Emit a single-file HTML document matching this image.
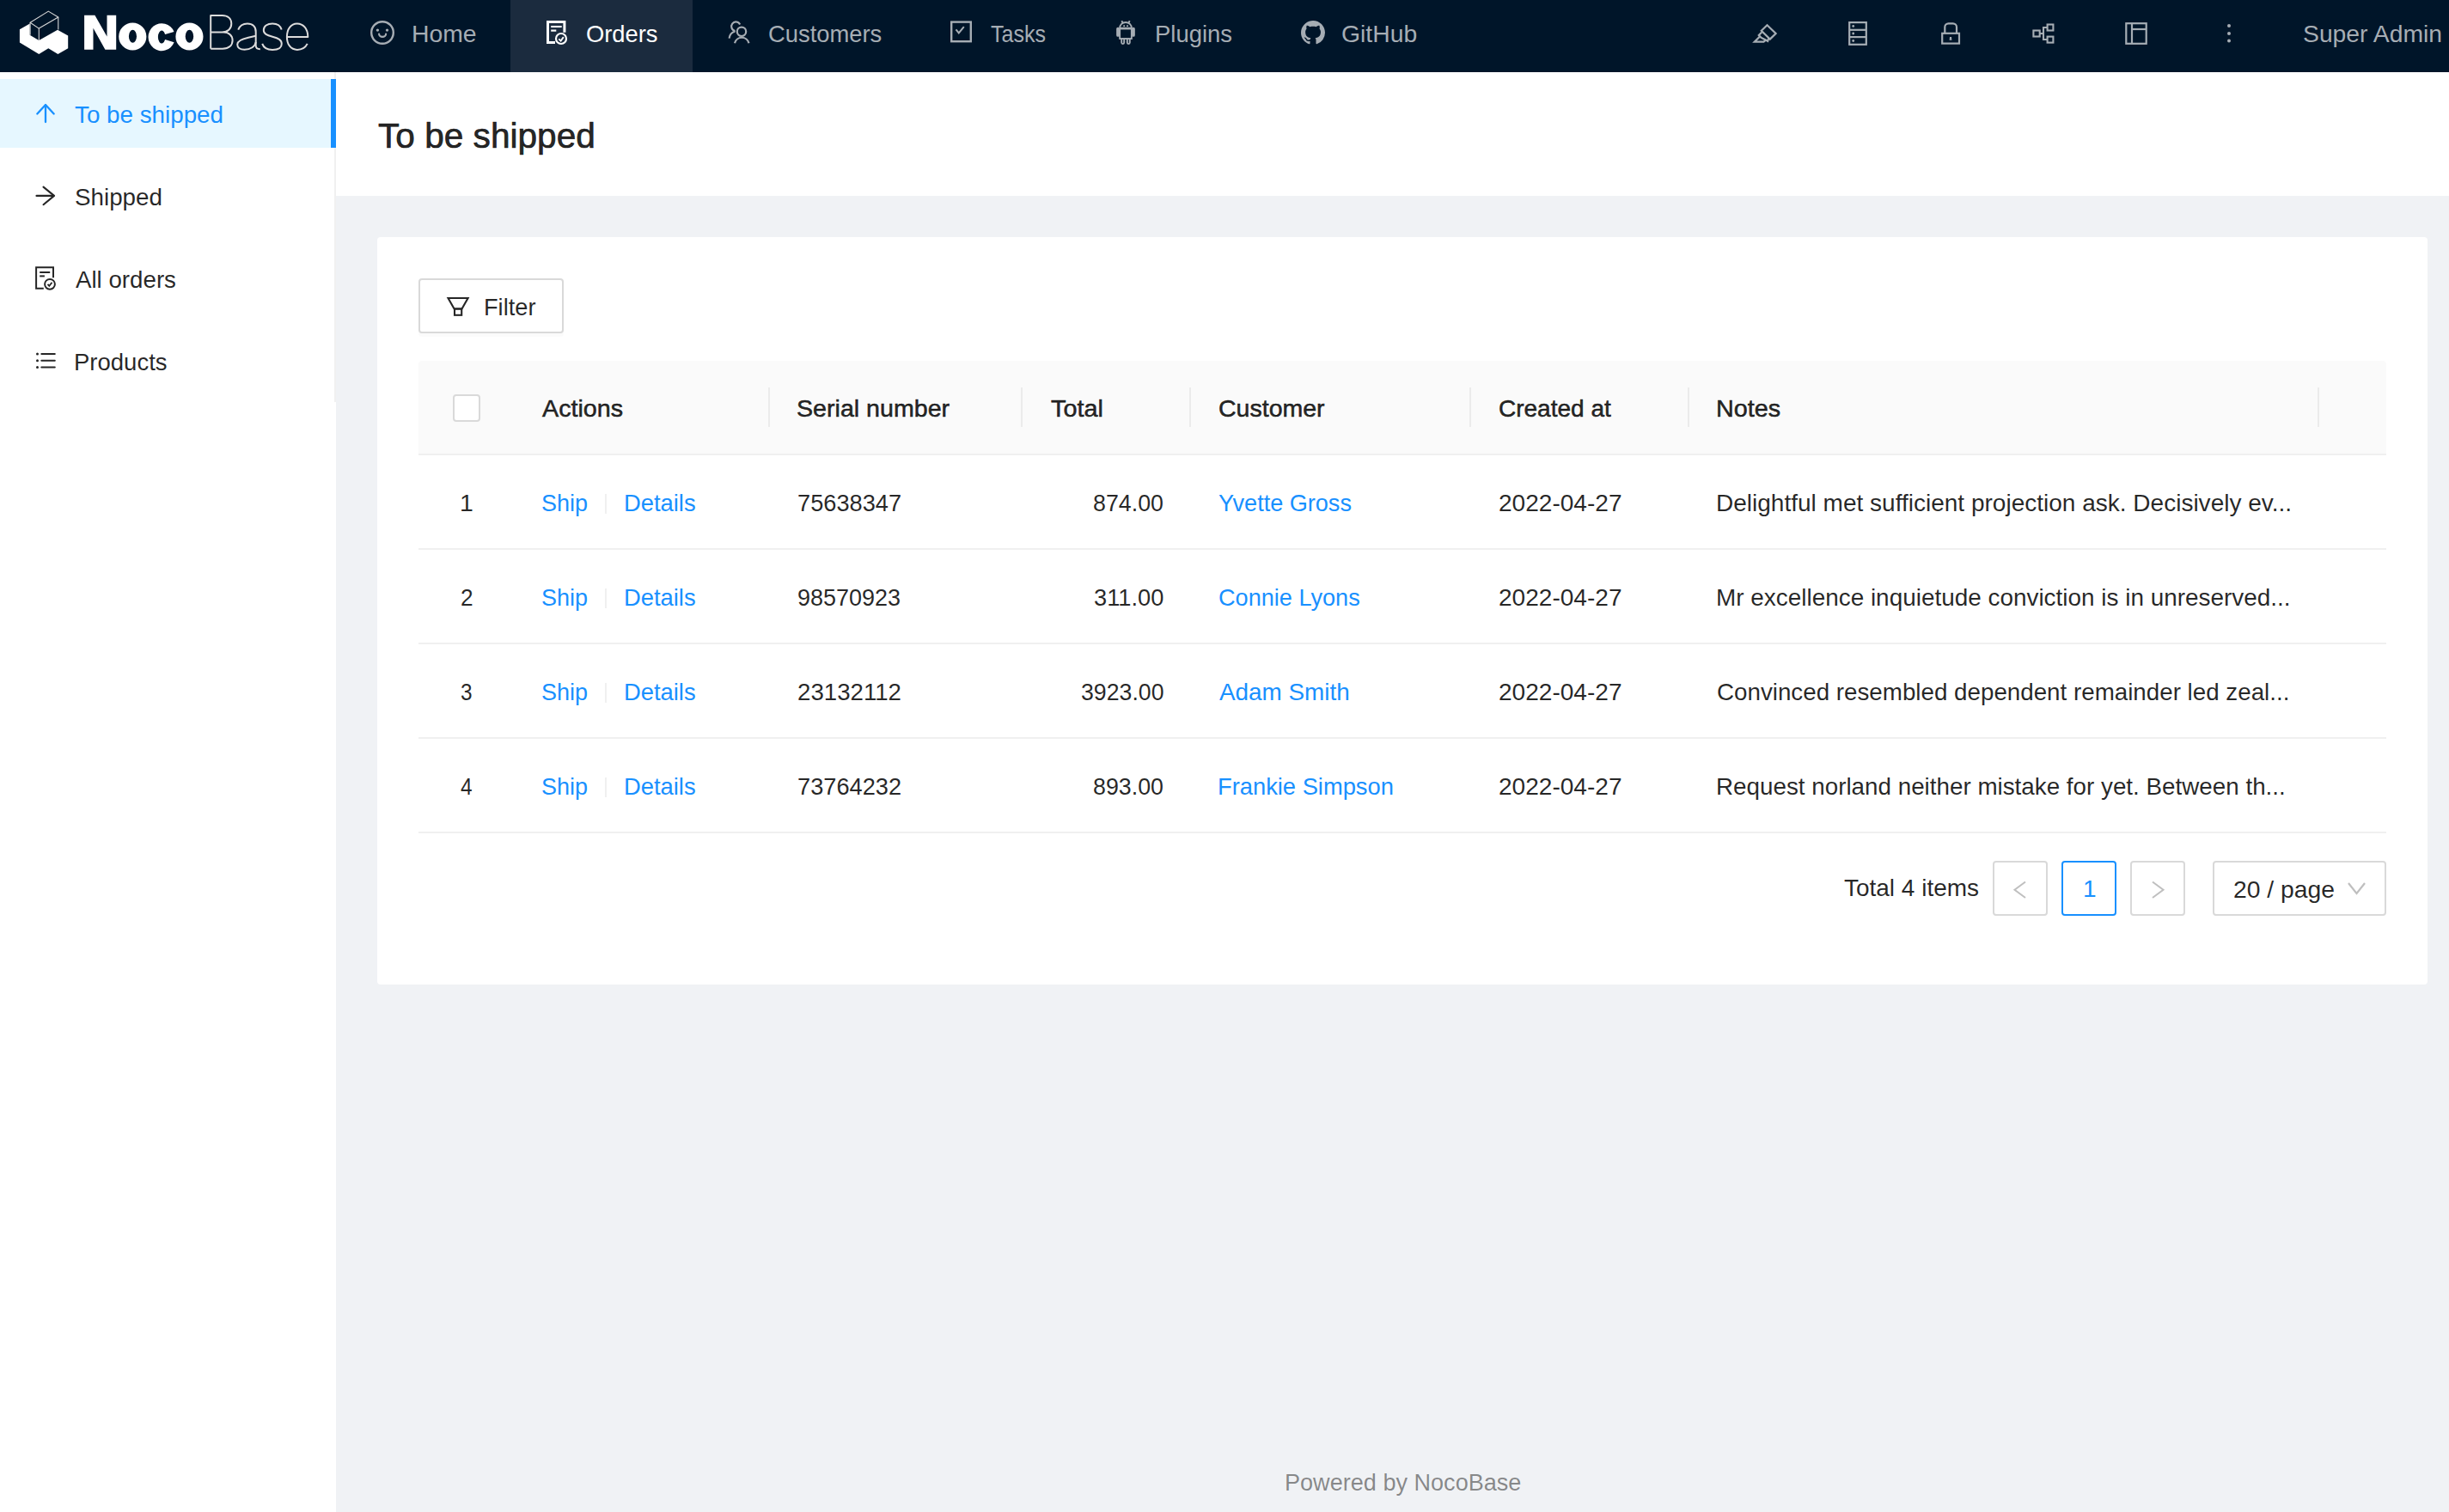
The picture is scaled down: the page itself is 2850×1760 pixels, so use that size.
<!DOCTYPE html>
<html><head><meta charset="utf-8"><title>NocoBase</title>
<style>
html,body{margin:0;padding:0;width:2850px;height:1760px;overflow:hidden;background:#f0f2f5;}
body{position:relative;font-family:'Liberation Sans',sans-serif;}
.r{position:absolute;box-sizing:border-box;}
.t{position:absolute;white-space:nowrap;transform-origin:0 0;font-family:'Liberation Sans',sans-serif;}
svg{position:absolute;left:0;top:0;}
</style></head><body>

<div class="r" style="left:0px;top:0px;width:2850px;height:84px;background:#001529;"></div>
<div class="r" style="left:594px;top:0px;width:212px;height:84px;background:#1b2b3e;"></div>
<div class="r" style="left:0px;top:84px;width:391px;height:1676px;background:#ffffff;"></div>
<div class="r" style="left:389px;top:84px;width:2px;height:384px;background:#f0f0f0;"></div>
<div class="r" style="left:0px;top:92px;width:385px;height:80px;background:#e6f7ff;"></div>
<div class="r" style="left:385px;top:92px;width:6px;height:80px;background:#1890ff;"></div>
<div class="r" style="left:391px;top:84px;width:2459px;height:144px;background:#ffffff;"></div>
<div class="r" style="left:439px;top:276px;width:2386px;height:870px;background:#ffffff;border-radius:4px;"></div>
<div class="r" style="left:487px;top:324px;width:169px;height:64px;background:#ffffff;border:2px solid #d9d9d9;border-radius:4px;box-shadow:0 4px 0 rgba(0,0,0,0.016);"></div>
<div class="r" style="left:487px;top:420px;width:2290px;height:108px;background:#fafafa;border-radius:4px 4px 0 0;"></div>
<div class="r" style="left:487px;top:528px;width:2290px;height:2px;background:#f0f0f0;"></div>
<div class="r" style="left:894px;top:451px;width:2px;height:46px;background:#ebebeb;"></div>
<div class="r" style="left:1188px;top:451px;width:2px;height:46px;background:#ebebeb;"></div>
<div class="r" style="left:1384px;top:451px;width:2px;height:46px;background:#ebebeb;"></div>
<div class="r" style="left:1710px;top:451px;width:2px;height:46px;background:#ebebeb;"></div>
<div class="r" style="left:1964px;top:451px;width:2px;height:46px;background:#ebebeb;"></div>
<div class="r" style="left:2697px;top:451px;width:2px;height:46px;background:#ebebeb;"></div>
<div class="r" style="left:527px;top:459px;width:32px;height:32px;background:#ffffff;border:2px solid #d9d9d9;border-radius:4px;"></div>
<div class="r" style="left:487px;top:638px;width:2290px;height:2px;background:#f0f0f0;"></div>
<div class="r" style="left:487px;top:748px;width:2290px;height:2px;background:#f0f0f0;"></div>
<div class="r" style="left:487px;top:858px;width:2290px;height:2px;background:#f0f0f0;"></div>
<div class="r" style="left:487px;top:968px;width:2290px;height:2px;background:#f0f0f0;"></div>
<div class="r" style="left:704px;top:575px;width:2px;height:23px;background:#f0f0f0;"></div>
<div class="r" style="left:704px;top:685px;width:2px;height:23px;background:#f0f0f0;"></div>
<div class="r" style="left:704px;top:795px;width:2px;height:23px;background:#f0f0f0;"></div>
<div class="r" style="left:704px;top:905px;width:2px;height:23px;background:#f0f0f0;"></div>
<div class="r" style="left:2319px;top:1002px;width:64px;height:64px;background:#ffffff;border:2px solid #d9d9d9;border-radius:4px;"></div>
<div class="r" style="left:2399px;top:1002px;width:64px;height:64px;background:#ffffff;border:2px solid #1890ff;border-radius:4px;"></div>
<div class="r" style="left:2479px;top:1002px;width:64px;height:64px;background:#ffffff;border:2px solid #d9d9d9;border-radius:4px;"></div>
<div class="r" style="left:2575px;top:1002px;width:202px;height:64px;background:#ffffff;border:2px solid #d9d9d9;border-radius:4px;"></div>
<svg width="2850" height="1760" viewBox="0 0 2850 1760">
<polygon fill="#ffffff" points="22.9,34.3 34.7,27.6 34.7,40.8 45.3,47.0 67.0,34.7 79.2,41.6 79.2,56.3 67.4,62.9 56.3,56.3 45.3,62.9 22.9,49.4"/>
<g fill="none" stroke="#d8d8d8" stroke-width="1.1" stroke-linejoin="round"><polygon points="35.1,26.3 56.3,13.1 67.8,20.0 45.3,33.1"/><polyline points="35.1,26.3 35.1,40.8"/><polyline points="45.3,33.1 45.3,47"/><polyline points="67.8,20.0 67.8,34.4"/></g>
<g fill="#ffffff"><polygon points="98.1,17.65 110.4,17.65 124.5,42.5 124.5,17.65 135.2,17.65 135.2,57.8 122.4,57.8 108.5,32.7 108.5,57.8 98.1,57.8"/><path fill-rule="evenodd" d="M138.2,42.45 a16.1,16 0 1,0 32.2,0 a16.1,16 0 1,0 -32.2,0 Z M149.9,42.3 a4.55,7.5 0 1,0 9.1,0 a4.55,7.5 0 1,0 -9.1,0 Z"/><path d="M202.5,36.9 A15.6,16 0 1,0 202.6,49.2 L192.1,46.1 A4.3,7.5 0 1,1 192.1,40 Z"/><path fill-rule="evenodd" d="M204.4,42.45 a16.05,16 0 1,0 32.1,0 a16.05,16 0 1,0 -32.1,0 Z M215.7,42.3 a4.75,7.5 0 1,0 9.5,0 a4.75,7.5 0 1,0 -9.5,0 Z"/></g>
<g fill="none" stroke="#dcdcdc" stroke-width="2" stroke-linecap="butt" stroke-linejoin="round"><path d="M245.2,56.7 V18 H258.5 C265,18 269.3,21.5 269.3,27.6 C269.3,33.6 265,37.6 258.5,37.6 H245.2 M258.5,37.6 H260 C266.5,37.6 270.6,41.5 270.6,47.1 C270.6,52.8 266.5,56.7 259,56.7 H245.2"/><path d="M277.2,34.6 C279,30 283,27.5 287.9,27.5 C294,27.5 297.7,31 297.7,37 V53 C297.7,56 299.5,57.2 302.8,57.2"/><path d="M297.7,41.8 L289,43.8 C281,45.5 276.2,47.5 276.2,51.8 C276.2,55.5 279.5,57.8 284.5,57.8 C291.5,57.8 297.2,54 297.7,49"/><path d="M327.7,34.6 C326.5,30 322.5,27.4 317.1,27.4 C311,27.4 306.8,30.5 306.8,35 C306.8,39.5 310.5,41 317.1,42.8 C324,44.6 327.8,46.3 327.8,51 C327.8,55.5 323.5,57.9 317.1,57.9 C310.5,57.9 306.6,55.2 305.2,50.9"/><path d="M334.1,42.9 H358.3 C358.3,33.5 353,27.5 345.7,27.5 C338.5,27.5 333.9,34 333.9,42.9 C333.9,51.8 338.5,57.9 345.9,57.9 C351.5,57.9 355.7,55 357.7,50.9"/></g>
<g fill="none" stroke="#a6adb4" stroke-width="2.4"><circle cx="445" cy="38" r="12.8"/><path d="M441.1,39.6 A4.0,3.3 0 0,0 449.1,39.6" stroke-width="2.2" stroke-linecap="round"/></g>
<circle cx="439.4" cy="35.1" r="1.7" fill="#a6adb4"/><circle cx="450.5" cy="35.1" r="1.7" fill="#a6adb4"/>
<g fill="none" stroke="#ffffff" stroke-width="3"><polyline points="646,49.5 637.5,49.5 637.5,25.4 656.9,25.4 656.9,37.8"/><line x1="641.2" y1="31" x2="653.7" y2="31" stroke-width="2.1"/><line x1="641.2" y1="35.6" x2="647.3" y2="35.6" stroke-width="2.2"/><circle cx="653" cy="45" r="6" stroke-width="2.2"/><polyline points="650.3,45.4 652.6,47.6 655.8,43.1" stroke-width="1.9"/></g>
<g fill="none" stroke="#a6adb4" stroke-width="2.2"><circle cx="863" cy="36.8" r="5.2"/><path d="M855,50.2 A8.5,8.5 0 0,1 871.5,50.2"/><path d="M861.2,28.5 A5.3,5.3 0 1,0 855.5,36"/><path d="M848.6,44.6 A9.5,9.5 0 0,1 855.5,36.5"/></g>
<g fill="none" stroke="#a6adb4" stroke-width="2.4"><rect x="1107.2" y="25.6" width="22.6" height="22.6"/><polyline points="1112.5,34.4 1115.8,38.5 1121.8,31.2" stroke-width="2"/></g>
<g fill="none" stroke="#a6adb4" stroke-width="1.9"><rect x="1303.15" y="33.5" width="13.7" height="11.5"/><path d="M1303.15,32.6 A6.85,6.6 0 0,1 1316.85,32.6 Z"/><rect x="1300.1" y="32.6" width="1.9" height="9.3" rx="0.9"/><rect x="1318" y="32.6" width="1.9" height="9.3" rx="0.9"/><path d="M1305.2,45 V49.6 A1.5,1.5 0 0,0 1308.2,49.6 V45"/><path d="M1311.8,45 V49.6 A1.5,1.5 0 0,0 1314.8,49.6 V45"/><line x1="1305.3" y1="24.3" x2="1306.8" y2="27"/><line x1="1314.7" y1="24.3" x2="1313.2" y2="27"/></g>
<rect x="1307.3" y="29.3" width="1.8" height="1.8" fill="#a6adb4"/><rect x="1311.1" y="29.3" width="1.8" height="1.8" fill="#a6adb4"/>
<path fill="#a6adb4" fill-rule="evenodd" transform="translate(1514,24) scale(1.75)" d="M8 0C3.58 0 0 3.58 0 8c0 3.54 2.29 6.53 5.47 7.59.4.07.55-.17.55-.38 0-.19-.01-.82-.01-1.49-2.01.37-2.53-.49-2.69-.94-.09-.23-.48-.94-.82-1.13-.28-.15-.68-.52-.01-.53.63-.01 1.08.58 1.23.82.72 1.21 1.87.87 2.33.66.07-.52.28-.87.51-1.07-1.78-.2-3.64-.89-3.640-3.950 0-.87.31-1.59.82-2.15-.08-.2-.36-1.02.08-2.12 0 0 .67-.21 2.2.82.64-.18 1.32-.27 2-.27.68 0 1.36.09 2 .27 1.53-1.04 2.2-.82 2.2-.82.44 1.1.16 1.92.08 2.12.51.56.82 1.27.82 2.15 0 3.07-1.87 3.750-3.65 3.95.29.25.54.73.54 1.48 0 1.07-.01 1.93-.01 2.2 0 .21.15.46.55.38A8.013 8.013 0 0016 8c0-4.42-3.58-8-8-8z"/>
<g fill="none" stroke="#a6adb4" stroke-width="2.2"><path d="M2056.5,29.3 L2066.6,39 L2059.8,45.6 L2049.8,35.8 Z" stroke-linejoin="miter"/><path d="M2050.2,37.5 L2046.8,41 L2049.3,43.6 L2057.2,47.8 L2058.3,44.2" /><path d="M2048,42.5 L2041.8,48.6 L2052.5,48.6 L2055.2,46.4"/></g>
<g fill="none" stroke="#a6adb4" stroke-width="2.2"><rect x="2152.2" y="26.1" width="19.6" height="25.7"/><line x1="2152.2" y1="34.8" x2="2171.8" y2="34.8"/><line x1="2152.2" y1="43.1" x2="2171.8" y2="43.1"/></g>
<circle cx="2156.7" cy="30.4" r="1.4" fill="#a6adb4"/>
<circle cx="2156.7" cy="39" r="1.4" fill="#a6adb4"/>
<circle cx="2156.7" cy="47.5" r="1.4" fill="#a6adb4"/>
<g fill="none" stroke="#a6adb4" stroke-width="2.2"><rect x="2260.2" y="38.8" width="19.8" height="11.8"/><path d="M2263.3,38.8 V31.5 A4.2,4.2 0 0,1 2267.5,27.3 H2272.8 A4.2,4.2 0 0,1 2277,31.5 V38.8"/></g>
<path fill="#a6adb4" d="M2269,43 h2 l0.4,3.8 h-2.8 Z"/>
<g fill="none" stroke="#a6adb4" stroke-width="2.1"><rect x="2366.4" y="35.5" width="7.3" height="7"/><rect x="2382.6" y="28.5" width="6.8" height="7"/><rect x="2382.6" y="42.6" width="6.8" height="7"/><polyline points="2382.6,32 2378,32 2378,46 2382.6,46"/><line x1="2373.7" y1="39" x2="2378" y2="39"/></g>
<g fill="none" stroke="#a6adb4" stroke-width="2.2"><rect x="2474.3" y="27.2" width="23.4" height="23.6"/><line x1="2481" y1="27.2" x2="2481" y2="50.8"/><line x1="2481" y1="34" x2="2497.7" y2="34"/></g>
<circle cx="2594" cy="30" r="2" fill="#a6adb4"/>
<circle cx="2594" cy="38.9" r="2" fill="#a6adb4"/>
<circle cx="2594" cy="47.6" r="2" fill="#a6adb4"/>
<g fill="none" stroke="#1890ff" stroke-width="2.3" stroke-linecap="round" stroke-linejoin="round"><line x1="53" y1="122.5" x2="53" y2="142"/><polyline points="43.3,132.5 53,122 62.7,132.5"/></g>
<g fill="none" stroke="#262626" stroke-width="2.1" stroke-linecap="round" stroke-linejoin="round"><line x1="42.5" y1="227.9" x2="62.5" y2="227.9"/><polyline points="50.5,217.6 63,227.9 50.5,238.2"/></g>
<g fill="none" stroke="#262626" stroke-width="2"><polyline points="50.8,335.7 42.1,335.7 42.1,311.2 62,311.2 62,323.3"/><line x1="46.2" y1="317" x2="58.2" y2="317"/><line x1="46.2" y1="321.4" x2="51.9" y2="321.4"/><circle cx="58" cy="330.8" r="5.9"/><polyline points="55.5,330.8 57.3,332.9 60.5,328.8" stroke-width="1.8"/></g>
<g fill="none" stroke="#262626" stroke-width="2" stroke-linecap="round"><line x1="48.3" y1="412" x2="63.8" y2="412"/><line x1="48.3" y1="419.8" x2="63.8" y2="419.8"/><line x1="48.3" y1="427.6" x2="63.8" y2="427.6"/></g>
<circle cx="43.5" cy="412" r="1.5" fill="#262626"/>
<circle cx="43.5" cy="419.8" r="1.5" fill="#262626"/>
<circle cx="43.5" cy="427.6" r="1.5" fill="#262626"/>
<g fill="none" stroke="#262626" stroke-width="2.1" stroke-linejoin="miter"><path d="M521.5,347 H544.6 L537.5,359.5 H528.6 Z"/><rect x="529" y="359.5" width="8.2" height="7.3"/></g>
<g fill="none" stroke="#bfbfbf" stroke-width="2.2"><polyline points="2357,1026.5 2344.5,1035.7 2357,1045" stroke-width="2"/><polyline points="2505,1026.5 2517.5,1035.7 2505,1045" stroke-width="2"/><polyline points="2733,1028 2742.5,1040 2752,1028" stroke="#bfbfbf"/></g>
</svg>
<span class="t" style="left:478.88px;top:26px;font-size:28px;line-height:28px;font-weight:400;color:#a6adb4;transform:scaleX(1.0125);">Home</span>
<span class="t" style="left:682.02px;top:26px;font-size:28px;line-height:28px;font-weight:400;color:#ffffff;transform:scaleX(0.9762);">Orders</span>
<span class="t" style="left:893.52px;top:26px;font-size:28px;line-height:28px;font-weight:400;color:#a6adb4;transform:scaleX(0.9774);">Customers</span>
<span class="t" style="left:1152.51px;top:26px;font-size:28px;line-height:28px;font-weight:400;color:#a6adb4;transform:scaleX(0.8943);">Tasks</span>
<span class="t" style="left:1343.84px;top:26px;font-size:28px;line-height:28px;font-weight:400;color:#a6adb4;transform:scaleX(0.9798);">Plugins</span>
<span class="t" style="left:1560.99px;top:26px;font-size:28px;line-height:28px;font-weight:400;color:#a6adb4;transform:scaleX(1.0118);">GitHub</span>
<span class="t" style="left:2679.99px;top:26px;font-size:28px;line-height:28px;font-weight:400;color:#a6adb4;transform:scaleX(1.0108);">Super Admin</span>
<span class="t" style="left:87.21px;top:120px;font-size:28px;line-height:28px;font-weight:400;color:#1890ff;transform:scaleX(0.9924);">To be shipped</span>
<span class="t" style="left:87.31px;top:216px;font-size:28px;line-height:28px;font-weight:400;color:rgba(0,0,0,0.85);transform:scaleX(0.9920);">Shipped</span>
<span class="t" style="left:88.30px;top:312px;font-size:28px;line-height:28px;font-weight:400;color:rgba(0,0,0,0.85);transform:scaleX(0.9889);">All orders</span>
<span class="t" style="left:86.34px;top:408px;font-size:28px;line-height:28px;font-weight:400;color:rgba(0,0,0,0.85);transform:scaleX(0.9824);">Products</span>
<span class="t" style="left:440.00px;top:138px;font-size:40px;line-height:40px;font-weight:400;color:rgba(0,0,0,0.85);transform:scaleX(1.0150);-webkit-text-stroke:0.70px rgba(0,0,0,0.85);">To be shipped</span>
<span class="t" style="left:563.26px;top:344px;font-size:28px;line-height:28px;font-weight:400;color:rgba(0,0,0,0.85);transform:scaleX(0.9717);">Filter</span>
<span class="t" style="left:630.70px;top:462px;font-size:28px;line-height:28px;font-weight:400;color:rgba(0,0,0,0.85);transform:scaleX(1.0253);-webkit-text-stroke:0.55px rgba(0,0,0,0.85);">Actions</span>
<span class="t" style="left:926.98px;top:462px;font-size:28px;line-height:28px;font-weight:400;color:rgba(0,0,0,0.85);transform:scaleX(1.0220);-webkit-text-stroke:0.55px rgba(0,0,0,0.85);">Serial number</span>
<span class="t" style="left:1222.70px;top:462px;font-size:28px;line-height:28px;font-weight:400;color:rgba(0,0,0,0.85);transform:scaleX(1.0293);-webkit-text-stroke:0.55px rgba(0,0,0,0.85);">Total</span>
<span class="t" style="left:1417.78px;top:462px;font-size:28px;line-height:28px;font-weight:400;color:rgba(0,0,0,0.85);transform:scaleX(1.0183);-webkit-text-stroke:0.55px rgba(0,0,0,0.85);">Customer</span>
<span class="t" style="left:1744.00px;top:462px;font-size:28px;line-height:28px;font-weight:400;color:rgba(0,0,0,0.85);transform:scaleX(1.0000);-webkit-text-stroke:0.55px rgba(0,0,0,0.85);">Created at</span>
<span class="t" style="left:1996.55px;top:462px;font-size:28px;line-height:28px;font-weight:400;color:rgba(0,0,0,0.85);transform:scaleX(1.0268);-webkit-text-stroke:0.55px rgba(0,0,0,0.85);">Notes</span>
<span class="t" style="left:2145.90px;top:1020px;font-size:28px;line-height:28px;font-weight:400;color:rgba(0,0,0,0.85);transform:scaleX(1.0000);">Total 4 items</span>
<span class="t" style="left:2599.29px;top:1022px;font-size:28px;line-height:28px;font-weight:400;color:rgba(0,0,0,0.85);transform:scaleX(1.0104);">20 / page</span>
<span class="t" style="left:1494.57px;top:1712px;font-size:28px;line-height:28px;font-weight:400;color:rgba(0,0,0,0.45);transform:scaleX(0.9670);">Powered by NocoBase</span>
<span class="t" style="left:534.67px;top:572px;font-size:28px;line-height:28px;font-weight:400;color:rgba(0,0,0,0.85);transform:scaleX(1.0167);">1</span>
<span class="t" style="left:629.74px;top:572px;font-size:28px;line-height:28px;font-weight:400;color:#1890ff;transform:scaleX(0.9630);">Ship</span>
<span class="t" style="left:725.55px;top:572px;font-size:28px;line-height:28px;font-weight:400;color:#1890ff;transform:scaleX(0.9771);">Details</span>
<span class="t" style="left:927.53px;top:572px;font-size:28px;line-height:28px;font-weight:400;color:rgba(0,0,0,0.85);transform:scaleX(0.9713);">75638347</span>
<span class="t" style="left:1272.04px;top:572px;font-size:28px;line-height:28px;font-weight:400;color:rgba(0,0,0,0.85);transform:scaleX(0.9571);">874.00</span>
<span class="t" style="left:1417.83px;top:572px;font-size:28px;line-height:28px;font-weight:400;color:#1890ff;transform:scaleX(0.9665);">Yvette Gross</span>
<span class="t" style="left:1744.00px;top:572px;font-size:28px;line-height:28px;font-weight:400;color:rgba(0,0,0,0.85);transform:scaleX(1.0021);">2022-04-27</span>
<span class="t" style="left:1996.60px;top:572px;font-size:28px;line-height:28px;font-weight:400;color:rgba(0,0,0,0.85);transform:scaleX(1.0006);">Delightful met sufficient projection ask. Decisively ev...</span>
<span class="t" style="left:535.76px;top:682px;font-size:28px;line-height:28px;font-weight:400;color:rgba(0,0,0,0.85);transform:scaleX(0.9385);">2</span>
<span class="t" style="left:629.74px;top:682px;font-size:28px;line-height:28px;font-weight:400;color:#1890ff;transform:scaleX(0.9630);">Ship</span>
<span class="t" style="left:725.55px;top:682px;font-size:28px;line-height:28px;font-weight:400;color:#1890ff;transform:scaleX(0.9771);">Details</span>
<span class="t" style="left:927.54px;top:682px;font-size:28px;line-height:28px;font-weight:400;color:rgba(0,0,0,0.85);transform:scaleX(0.9634);">98570923</span>
<span class="t" style="left:1272.63px;top:682px;font-size:28px;line-height:28px;font-weight:400;color:rgba(0,0,0,0.85);transform:scaleX(0.9732);">311.00</span>
<span class="t" style="left:1417.83px;top:682px;font-size:28px;line-height:28px;font-weight:400;color:#1890ff;transform:scaleX(0.9679);">Connie Lyons</span>
<span class="t" style="left:1744.00px;top:682px;font-size:28px;line-height:28px;font-weight:400;color:rgba(0,0,0,0.85);transform:scaleX(1.0021);">2022-04-27</span>
<span class="t" style="left:1996.61px;top:682px;font-size:28px;line-height:28px;font-weight:400;color:rgba(0,0,0,0.85);transform:scaleX(0.9967);">Mr excellence inquietude conviction is in unreserved...</span>
<span class="t" style="left:535.83px;top:792px;font-size:28px;line-height:28px;font-weight:400;color:rgba(0,0,0,0.85);transform:scaleX(0.8714);">3</span>
<span class="t" style="left:629.74px;top:792px;font-size:28px;line-height:28px;font-weight:400;color:#1890ff;transform:scaleX(0.9630);">Ship</span>
<span class="t" style="left:725.55px;top:792px;font-size:28px;line-height:28px;font-weight:400;color:#1890ff;transform:scaleX(0.9771);">Details</span>
<span class="t" style="left:927.51px;top:792px;font-size:28px;line-height:28px;font-weight:400;color:rgba(0,0,0,0.85);transform:scaleX(0.9875);">23132112</span>
<span class="t" style="left:1258.05px;top:792px;font-size:28px;line-height:28px;font-weight:400;color:rgba(0,0,0,0.85);transform:scaleX(0.9535);">3923.00</span>
<span class="t" style="left:1418.80px;top:792px;font-size:28px;line-height:28px;font-weight:400;color:#1890ff;transform:scaleX(0.9947);">Adam Smith</span>
<span class="t" style="left:1744.00px;top:792px;font-size:28px;line-height:28px;font-weight:400;color:rgba(0,0,0,0.85);transform:scaleX(1.0021);">2022-04-27</span>
<span class="t" style="left:1997.61px;top:792px;font-size:28px;line-height:28px;font-weight:400;color:rgba(0,0,0,0.85);transform:scaleX(0.9910);">Convinced resembled dependent remainder led zeal...</span>
<span class="t" style="left:535.83px;top:902px;font-size:28px;line-height:28px;font-weight:400;color:rgba(0,0,0,0.85);transform:scaleX(0.8714);">4</span>
<span class="t" style="left:629.74px;top:902px;font-size:28px;line-height:28px;font-weight:400;color:#1890ff;transform:scaleX(0.9630);">Ship</span>
<span class="t" style="left:725.55px;top:902px;font-size:28px;line-height:28px;font-weight:400;color:#1890ff;transform:scaleX(0.9771);">Details</span>
<span class="t" style="left:927.53px;top:902px;font-size:28px;line-height:28px;font-weight:400;color:rgba(0,0,0,0.85);transform:scaleX(0.9713);">73764232</span>
<span class="t" style="left:1272.04px;top:902px;font-size:28px;line-height:28px;font-weight:400;color:rgba(0,0,0,0.85);transform:scaleX(0.9571);">893.00</span>
<span class="t" style="left:1416.85px;top:902px;font-size:28px;line-height:28px;font-weight:400;color:#1890ff;transform:scaleX(0.9752);">Frankie Simpson</span>
<span class="t" style="left:1744.00px;top:902px;font-size:28px;line-height:28px;font-weight:400;color:rgba(0,0,0,0.85);transform:scaleX(1.0021);">2022-04-27</span>
<span class="t" style="left:1996.61px;top:902px;font-size:28px;line-height:28px;font-weight:400;color:rgba(0,0,0,0.85);transform:scaleX(0.9926);">Request norland neither mistake for yet. Between th...</span>
<span class="t" style="left:2424px;top:1021px;font-size:28px;line-height:28px;color:#1890ff;">1</span>
</body></html>
